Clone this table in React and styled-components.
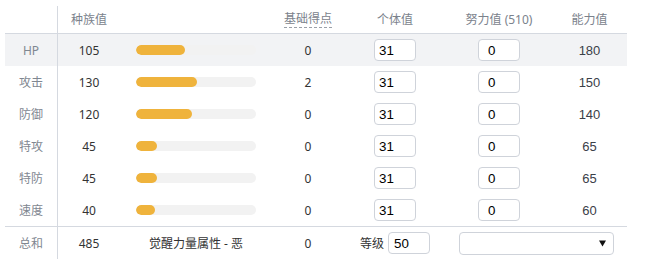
import React from "react";
import styled, { createGlobalStyle } from "styled-components";

const GlobalStyle = createGlobalStyle`
  body {
    margin: 0;
    background: #fff;
    font-family: "Noto Sans", "Noto Sans CJK SC", sans-serif;
    font-size: 12px;
    color: #333;
  }
`;

const COLS = "53px 62px 152px 72px 102px 106px 75px";
const LINE = "#d5d9e0";

const Table = styled.div`
  margin: 6px 0 0 5px;
  width: 622px;
`;

const Row = styled.div`
  display: grid;
  grid-template-columns: ${COLS};
  height: ${(p) => p.$height || 32}px;
  background: ${(p) => (p.$shaded ? "#f2f3f5" : "transparent")};
  border-bottom: ${(p) => (p.$divider ? `1px solid ${LINE}` : "none")};
`;

const Cell = styled.div`
  display: flex;
  align-items: center;
  justify-content: center;
  gap: 4px;
  color: ${(p) => p.$color || "#333"};
  grid-column: ${(p) => (p.$span ? `span ${p.$span}` : "auto")};
  font-family: ${(p) =>
    p.$arial ? '"Liberation Sans", Arial, sans-serif' : "inherit"};
  font-size: ${(p) => (p.$arial ? "13px" : "12px")};
`;

const LabelCell = styled(Cell)`
  border-right: 1px solid ${LINE};
  color: #7f8791;
`;

const HeadText = styled.span`
  color: #7b828c;
  line-height: 16px;
`;

const DottedHead = styled(HeadText)`
  border-bottom: 1px dashed #9aa0a8;
`;

const Track = styled.div`
  width: 120px;
  height: 10px;
  border-radius: 5px;
  background: #f2f2f2;
  overflow: hidden;
`;

const Fill = styled.div`
  height: 100%;
  border-radius: 5px;
  background: #efb33c;
`;

const NumInput = styled.input`
  box-sizing: border-box;
  width: 42px;
  height: 22px;
  border: 1px solid #cfd3da;
  border-radius: 4px;
  padding: 0 0 0 ${(p) => p.$pad || 4}px;
  font-family: "Liberation Sans", Arial, sans-serif;
  font-size: 13.33px;
  color: #000;
  background: #fff;
  outline: none;
`;

const Select = styled.div`
  box-sizing: border-box;
  width: 155px;
  height: 23px;
  border: 1px solid #cfd3da;
  border-radius: 4px;
  background: #fff;
  display: flex;
  align-items: center;
  justify-content: flex-end;
  padding-right: 7px;
`;

const stats = [
  { name: "HP", base: 105, points: 0, iv: 31, ev: 0, value: 180 },
  { name: "攻击", base: 130, points: 2, iv: 31, ev: 0, value: 150 },
  { name: "防御", base: 120, points: 0, iv: 31, ev: 0, value: 140 },
  { name: "特攻", base: 45, points: 0, iv: 31, ev: 0, value: 65 },
  { name: "特防", base: 45, points: 0, iv: 31, ev: 0, value: 65 },
  { name: "速度", base: 40, points: 0, iv: 31, ev: 0, value: 60 },
];

function StatBar({ base }) {
  return (
    <Track>
      <Fill style={{ width: `${Math.round((base / 255) * 120)}px` }} />
    </Track>
  );
}

export default function App() {
  const total = stats.reduce((s, r) => s + r.base, 0);
  return (
    <>
      <GlobalStyle />
      <Table>
        <Row $height={27} $divider>
          <LabelCell />
          <Cell>
            <HeadText>种族值</HeadText>
          </Cell>
          <Cell />
          <Cell>
            <DottedHead>基础得点</DottedHead>
          </Cell>
          <Cell>
            <HeadText>个体值</HeadText>
          </Cell>
          <Cell>
            <HeadText>努力值 (510)</HeadText>
          </Cell>
          <Cell>
            <HeadText>能力值</HeadText>
          </Cell>
        </Row>
        {stats.map((s, i) => (
          <Row key={s.name} $shaded={i === 0} $divider={i === stats.length - 1}>
            <LabelCell>{s.name}</LabelCell>
            <Cell>{s.base}</Cell>
            <Cell>
              <StatBar base={s.base} />
            </Cell>
            <Cell>{s.points}</Cell>
            <Cell>
              <NumInput defaultValue={s.iv} $pad={4} />
            </Cell>
            <Cell>
              <NumInput defaultValue={s.ev} $pad={9} />
            </Cell>
            <Cell $arial $color="#3b4048">
              {s.value}
            </Cell>
          </Row>
        ))}
        <Row>
          <LabelCell>总和</LabelCell>
          <Cell>{total}</Cell>
          <Cell>觉醒力量属性 - 恶</Cell>
          <Cell>0</Cell>
          <Cell>
            <span>等级</span>
            <NumInput defaultValue={50} $pad={5} />
          </Cell>
          <Cell $span={2}>
            <Select>
              <svg width="7" height="7" viewBox="0 0 7 7">
                <path d="M0 0.5 H7 L3.5 6.5 Z" fill="#111" />
              </svg>
            </Select>
          </Cell>
        </Row>
      </Table>
    </>
  );
}
